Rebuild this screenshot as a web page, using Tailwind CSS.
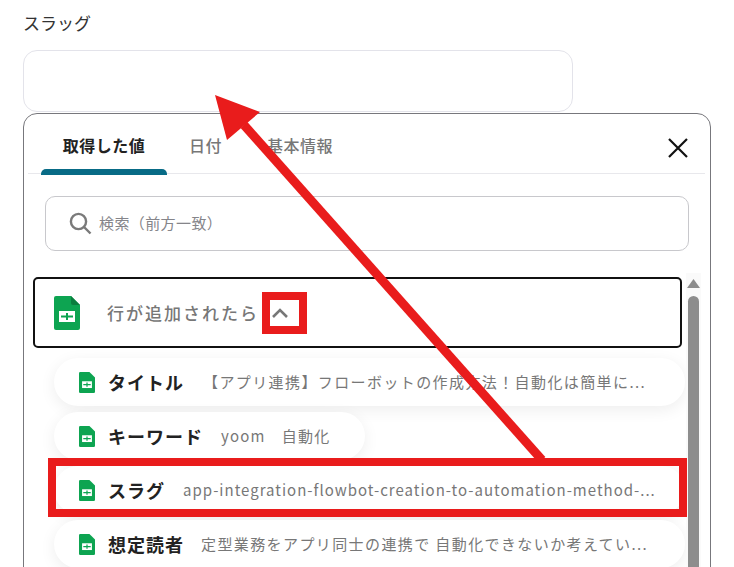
<!doctype html>
<html lang="ja"><head><meta charset="utf-8"><script src="https://cdn.jsdelivr.net/npm/@tailwindcss/browser@4"></script></head>
<body class="bg-white">
<div class="relative w-[734px] h-[567px] overflow-hidden bg-white pl-[23px] font-['Noto_Sans_CJK_JP',sans-serif]">
  <div class="h-[50px] pt-[8px] text-[17px] leading-[30px] text-[#333]">スラッグ</div>
  <div class="w-[550px] h-[62px] rounded-[14px] border border-[#e3e3ea]"></div>
  <div class="mt-px w-[688px] h-[600px] rounded-t-[14px] border border-[#77777c] pl-[4px] pr-[5px]">
    <div class="relative h-[60px] border-b border-[#e8e8ec] flex text-[16px] font-medium tracking-[0.5px]">
      <div class="ml-[13px] w-[126px] h-[60px] pt-[17px] text-center leading-[28px] text-[#222] font-bold relative">取得した値<div class="absolute left-0 right-0 bottom-[-1px] h-[6px] rounded-t-[5px] bg-[#086b86]"></div></div>
      <div class="ml-[22px] pt-[17px] leading-[28px] text-[#777]">日付</div>
      <div class="ml-[45px] pt-[17px] leading-[28px] text-[#777]">基本情報</div>
      <svg class="absolute left-[639px] top-[23px]" width="22" height="22" viewBox="0 0 22 22" fill="none" stroke="#111" stroke-width="2.2"><path d="M2 2 20 20M20 2 2 20"/></svg>
    </div>
    <div class="mt-[22px] ml-[17px] w-[644px] h-[55px] rounded-[10px] border border-[#c8c8cc] flex items-center pl-[23px] gap-[7px]">
      <svg width="23" height="23" viewBox="0 0 23 23" fill="none" stroke="#7a7a7a" stroke-width="2.4"><circle cx="9.5" cy="9.5" r="7.6"/><path d="m15 15 6.5 6.5"/></svg>
      <span class="text-[15px] tracking-[0.4px] text-[#85858a]">検索（前方一致）</span>
    </div>
    <div class="relative mt-[26px] flex">
      <div class="w-[655px]">
        <div class="ml-[5px] w-[649px] h-[71px] rounded-[5px] border-2 border-[#111] flex items-center pl-[19px]">
          <svg width="26" height="34" viewBox="0 0 26 34"><path d="M2 0H17L26 9V32a2 2 0 0 1-2 2H2a2 2 0 0 1-2-2V2a2 2 0 0 1 2-2Z" fill="#0da451"/><path d="M17 0 26 9H19a2 2 0 0 1-2-2Z" fill="#0b7d3e"/><rect x="5" y="15" width="16" height="11" fill="#fff"/><path d="M13 17v7M7 20.5h12" stroke="#0da451" stroke-width="2" fill="none"/><path d="M7 17h12v7H7Z" fill="none" stroke="#0da451" stroke-width="0"/></svg>
          <span class="ml-[27px] text-[17px] font-medium tracking-[2px] text-[#777]">行が追加されたら</span>
          <svg class="ml-[11px]" width="20" height="14" viewBox="0 0 20 14" fill="none" stroke="#777" stroke-width="2.6"><path d="M3 11 10 4l7 7"/></svg>
        </div>
        <div class="ml-[26px] mt-[10px] flex flex-col gap-[6px]">
          <div class="w-[631px] h-[48px] rounded-[24px] bg-white shadow-[0_4px_16px_rgba(0,0,0,0.07)] flex items-center pl-[25px] whitespace-nowrap">
            <svg width="16" height="21" viewBox="0 0 26 34"><path d="M2 0H17L26 9V32a2 2 0 0 1-2 2H2a2 2 0 0 1-2-2V2a2 2 0 0 1 2-2Z" fill="#0da451"/><rect x="5" y="15" width="16" height="11" fill="#fff"/><path d="M13 17v7M7 20.5h12" stroke="#0da451" stroke-width="2" fill="none"/></svg>
            <span class="ml-[13px] text-[18px] font-bold tracking-[1px] text-[#222]">タイトル</span>
            <span class="ml-[19px] text-[15px] tracking-[1.4px] text-[#777]">【アプリ連携】フローボットの作成方法！自動化は簡単に...</span>
          </div>
          <div class="w-[311px] h-[48px] rounded-[24px] bg-white shadow-[0_4px_16px_rgba(0,0,0,0.07)] flex items-center pl-[25px] whitespace-nowrap">
            <svg width="16" height="21" viewBox="0 0 26 34"><path d="M2 0H17L26 9V32a2 2 0 0 1-2 2H2a2 2 0 0 1-2-2V2a2 2 0 0 1 2-2Z" fill="#0da451"/><rect x="5" y="15" width="16" height="11" fill="#fff"/><path d="M13 17v7M7 20.5h12" stroke="#0da451" stroke-width="2" fill="none"/></svg>
            <span class="ml-[13px] text-[18px] font-bold tracking-[1px] text-[#222]">キーワード</span>
            <span class="ml-[18px] text-[15px] tracking-[1.2px] text-[#777]">yoom　自動化</span>
          </div>
          <div class="w-[631px] h-[48px] rounded-[24px] bg-white shadow-[0_4px_16px_rgba(0,0,0,0.07)] flex items-center pl-[25px] whitespace-nowrap">
            <svg width="16" height="21" viewBox="0 0 26 34"><path d="M2 0H17L26 9V32a2 2 0 0 1-2 2H2a2 2 0 0 1-2-2V2a2 2 0 0 1 2-2Z" fill="#0da451"/><rect x="5" y="15" width="16" height="11" fill="#fff"/><path d="M13 17v7M7 20.5h12" stroke="#0da451" stroke-width="2" fill="none"/></svg>
            <span class="ml-[13px] text-[18px] font-bold tracking-[1px] text-[#222]">スラグ</span>
            <span class="ml-[18px] text-[15px] tracking-[1px] text-[#777]">app-integration-flowbot-creation-to-automation-method-...</span>
          </div>
          <div class="w-[631px] h-[48px] rounded-[24px] bg-white shadow-[0_4px_16px_rgba(0,0,0,0.07)] flex items-center pl-[25px] whitespace-nowrap">
            <svg width="16" height="21" viewBox="0 0 26 34"><path d="M2 0H17L26 9V32a2 2 0 0 1-2 2H2a2 2 0 0 1-2-2V2a2 2 0 0 1 2-2Z" fill="#0da451"/><rect x="5" y="15" width="16" height="11" fill="#fff"/><path d="M13 17v7M7 20.5h12" stroke="#0da451" stroke-width="2" fill="none"/></svg>
            <span class="ml-[13px] text-[18px] font-bold tracking-[1px] text-[#222]">想定読者</span>
            <span class="ml-[17px] text-[15px] tracking-[1.4px] text-[#777]">定型業務をアプリ同士の連携で 自動化できないか考えてい...</span>
          </div>
        </div>
      </div>
      <div class="absolute left-[658px] top-[-4px] w-[15px] h-[320px] bg-[#fafafa] flex flex-col items-center">
        <svg class="mt-[6px]" width="13" height="9" viewBox="0 0 13 9"><path d="M6.5 0 13 9H0Z" fill="#8d8d8d"/></svg>
        <div class="mt-[8px] w-[11px] flex-1 rounded-t-[6px] bg-[#8d8d8d]"></div>
      </div>
    </div>
  </div>
  <svg class="absolute inset-0 pointer-events-none" width="734" height="567" viewBox="0 0 734 567" fill="none">
    <rect x="266" y="296" width="37" height="34" stroke="#e91c1c" stroke-width="8"/>
    <rect x="52" y="462" width="631" height="51" stroke="#e91c1c" stroke-width="8"/>
    <path d="M542 460 244 125" stroke="#e91c1c" stroke-width="9"/>
    <path d="M215 95 260 112 227 140Z" fill="#e91c1c"/>
  </svg>
</div>
</body></html>
